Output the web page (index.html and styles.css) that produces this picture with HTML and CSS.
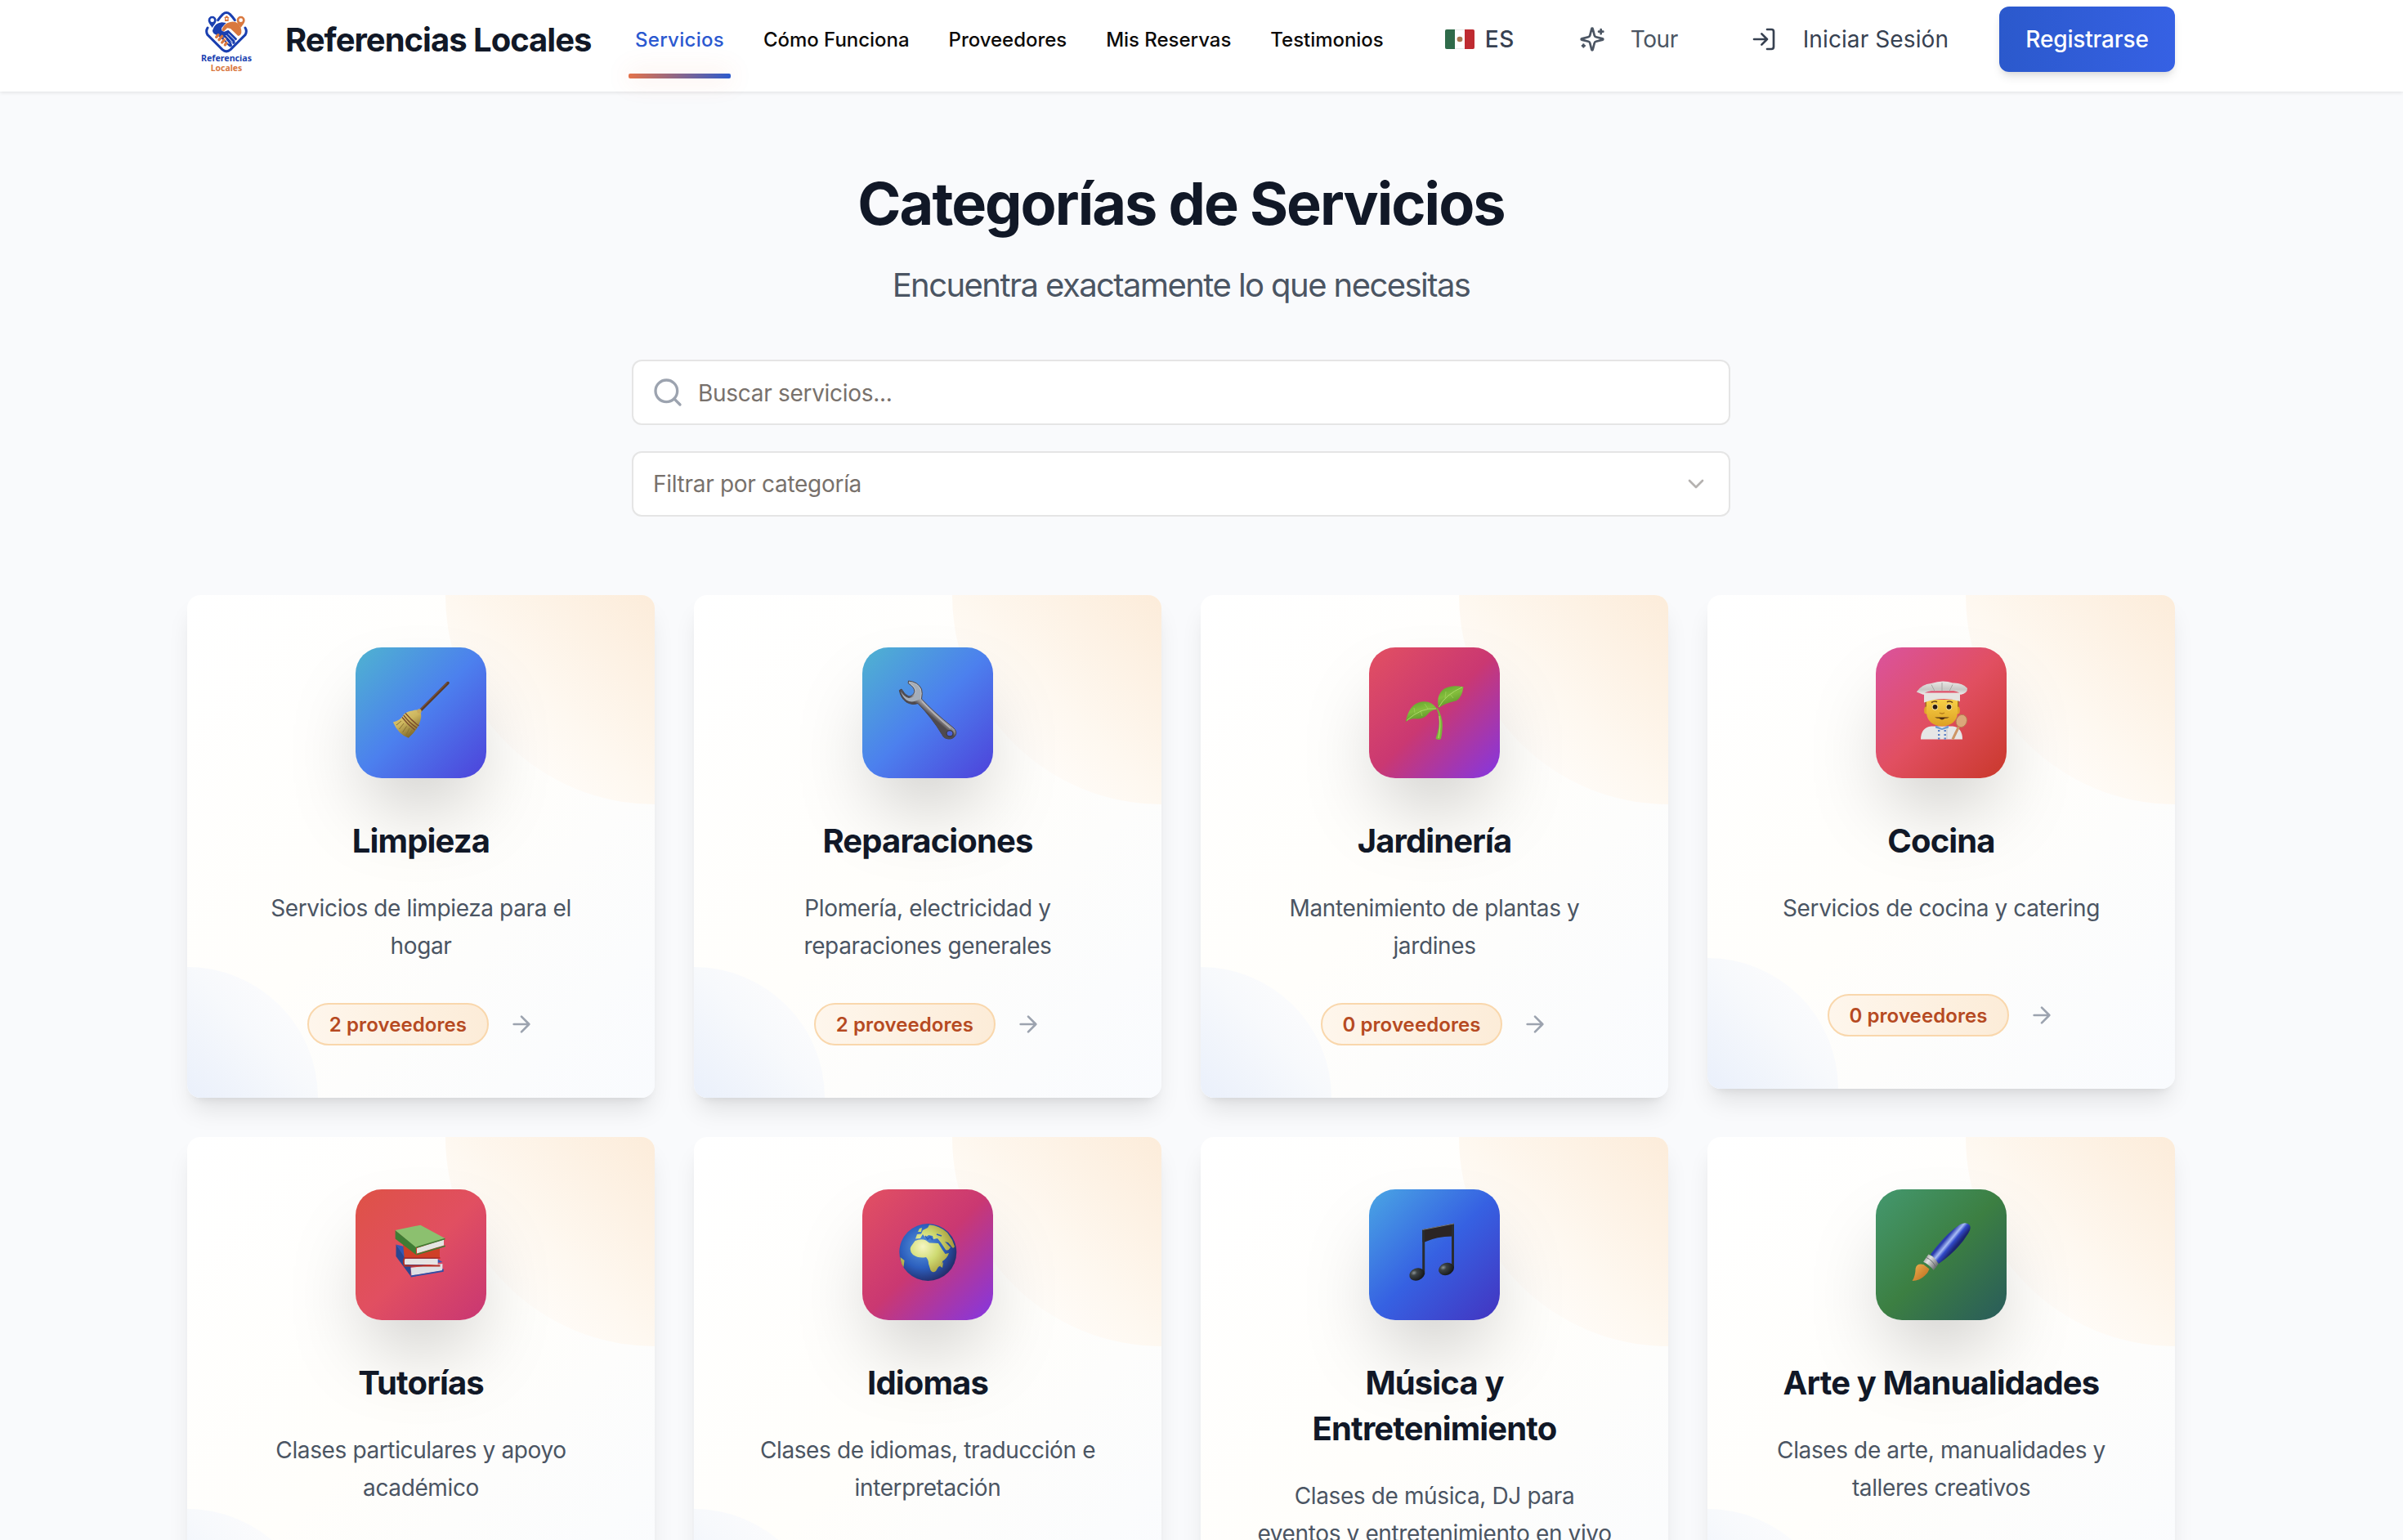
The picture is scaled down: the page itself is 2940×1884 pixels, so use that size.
FILE: index.html
```html
<!DOCTYPE html>
<html lang="es">
<head>
<meta charset="utf-8">
<title>Referencias Locales</title>
<link rel="stylesheet" href="styles.css">
</head>
<body>
<header class="header">
  <div class="header-inner">
    <a class="brand">
      <svg class="brand-logo" viewBox="-21 -18 288 288">
        <g fill="none" stroke="#1a3fb0" stroke-width="9" stroke-linecap="round" stroke-linejoin="round">
          <path d="M92 56 Q100 44 110 34 Q123 23 136 34 Q146 44 154 56"/>
          <path d="M54 84 Q46 96 54 110 L108 164 Q123 177 138 164 L192 110 Q200 96 192 84"/>
        </g>
        <path fill="#1a3fb0" d="M71 41a15 15 0 0 1 15 15c0 10-9 17-15 28c-6-11-15-18-15-28a15 15 0 0 1 15-15z"/>
        <circle cx="71" cy="56" r="7" fill="#fff"/>
        <path fill="#d9783f" d="M176 41a15 15 0 0 1 15 15c0 10-9 17-15 28c-6-11-15-18-15-28a15 15 0 0 1 15-15z"/>
        <circle cx="176" cy="56" r="7" fill="#fff"/>
        <path fill="#d9783f" d="M124 39l10 9h-3v12h-14v-12h-3z"/>
        <rect x="121" y="48" width="6" height="6" fill="#fff"/>
        <path fill="#1a3fb0" d="M72 94Q80 66 106 64L122 66L106 84Q102 98 116 98L130 92L162 124Q162 131 154 130L152 128Q160 142 148 144L136 132Q148 148 142 153Q136 157 130 150L116 134L96 116L82 108Q72 104 72 94z"/>
        <path fill="#d9783f" d="M106 92Q112 74 127 66Q150 56 166 68Q180 84 178 102Q176 112 166 114L138 87L126 85L116 95Q108 98 106 92z"/>
        <g stroke="#d9783f" stroke-width="10" stroke-linecap="round">
          <path d="M86 118l7-8M96 128l11-13M107 138l11-13M118 147l6-8"/>
        </g>
        <g stroke="#fff" stroke-width="3" stroke-linecap="round">
          <path d="M131 106l22 22M122 112l23 25M114 120l18 22"/>
        </g>
        <text class="logo-text" x="30" y="207" fill="#1a3fb0" textLength="186" lengthAdjust="spacingAndGlyphs">Referencias</text>
        <text class="logo-text" x="65" y="243" fill="#d9783f" textLength="116" lengthAdjust="spacingAndGlyphs">Locales</text>
      </svg>
      <span class="brand-name">Referencias Locales</span>
    </a>
    <nav class="nav">
      <a class="nav-link active">Servicios</a>
      <a class="nav-link">Cómo Funciona</a>
      <a class="nav-link">Proveedores</a>
      <a class="nav-link">Mis Reservas</a>
      <a class="nav-link">Testimonios</a>
    </nav>
    <div class="actions">
      <a class="lang">
        <svg class="flag" viewBox="0 0 36 24"><defs><clipPath id="flag-clip"><rect width="36" height="24" rx="2"/></clipPath></defs><g clip-path="url(#flag-clip)"><rect width="36" height="24" fill="#fff"/><path d="M0 0h36v24H0z" fill="none" stroke="#d5dad8"/><rect width="12" height="24" fill="#2f6b4a"/><rect x="24" width="12" height="24" fill="#bf2b31"/><ellipse cx="18" cy="12" rx="3.4" ry="3.2" fill="#a8764f"/></g></svg>
        <span>ES</span>
      </a>
      <a class="tour">
        <svg class="icon" viewBox="0 0 24 24"><path d="M9.937 15.5A2 2 0 0 0 8.5 14.063l-6.135-1.582a.5.5 0 0 1 0-.962L8.5 9.936A2 2 0 0 0 9.937 8.5l1.582-6.135a.5.5 0 0 1 .963 0L14.063 8.5A2 2 0 0 0 15.5 9.937l6.135 1.581a.5.5 0 0 1 0 .964L15.5 14.063a2 2 0 0 0-1.437 1.437l-1.582 6.135a.5.5 0 0 1-.963 0z"/><path d="M20 3v4M22 5h-4M4 17v2M5 18H3"/></svg>
        <span>Tour</span>
      </a>
      <a class="login">
        <svg class="icon" viewBox="0 0 24 24"><path d="M15 3h4a2 2 0 0 1 2 2v14a2 2 0 0 1-2 2h-4M10 17l5-5-5-5M15 12H3"/></svg>
        <span>Iniciar Sesión</span>
      </a>
      <a class="register">Registrarse</a>
    </div>
  </div>
</header>

<main class="main">
  <h1 class="title">Categorías de Servicios</h1>
  <p class="subtitle">Encuentra exactamente lo que necesitas</p>
  <div class="filters">
    <div class="field">
      <svg class="icon search-icon" viewBox="0 0 24 24"><circle cx="11" cy="11" r="8"/><path d="m21 21-4.3-4.3"/></svg>
      <span class="search-text">Buscar servicios...</span>
    </div>
    <div class="field select">
      <span>Filtrar por categoría</span>
      <svg class="icon chevron" viewBox="0 0 24 24"><path d="m6 9 6 6 6-6"/></svg>
    </div>
  </div>

  <section class="grid">
    <article class="card">
      <div class="tile sky">
        <svg class="glyph" viewBox="0 0 72 72">
          <defs><linearGradient id="straw" x1="0" y1="0" x2=".6" y2="1"><stop offset="0" stop-color="#e3cf80"/><stop offset=".5" stop-color="#cdb65e"/><stop offset="1" stop-color="#7a6327"/></linearGradient></defs>
          <path d="M69 3.6L35.5 37" stroke="#5b3a26" stroke-width="3.6" stroke-linecap="round"/>
          <path d="M68.500 3L35 36.200" stroke="#8a6142" stroke-width="1"/>
          <path d="M25.600 37.500Q31 35.500 34.500 38Q37.500 42 35.500 49Q33 60 20.800 70.800Q8 66 1.900 51.400Q12 49 15 42Q19 38 25.600 37.500z" fill="url(#straw)"/>
          <circle cx="34" cy="38" r="2.700" fill="#c9a95a"/>
          <path d="M17 40.500Q25 50 33.500 56M14.800 43Q22 52.500 31 58.500M13 45.500Q20 54.500 28.500 61" fill="none" stroke="#7b4a2b" stroke-width="1.300"/>
          <path d="M12 50L6 55M15 53L9.500 60M18.500 56.500L13.500 64M22 59L18 67M25 61L20.500 69" stroke="#8b7433" stroke-width="1"/>
        </svg>
      </div>
      <h3 class="name">Limpieza</h3>
      <p class="desc">Servicios de limpieza para el hogar</p>
      <div class="meta"><span class="badge">2 proveedores</span><svg class="icon arrow" viewBox="0 0 24 24"><path d="M5 12h14M12 5l7 7-7 7"/></svg></div>
    </article>

    <article class="card">
      <div class="tile sky">
        <svg class="glyph" viewBox="0 0 72 72">
          <defs><linearGradient id="steel" gradientUnits="userSpaceOnUse" x1="42" y1="34" x2="36" y2="41"><stop offset="0" stop-color="#b9bcc2"/><stop offset=".5" stop-color="#8d8a8d"/><stop offset="1" stop-color="#4f4a4e"/></linearGradient></defs>
          <path d="M12.500 1Q24 2 28.500 11Q30 16 28.500 23Q42 38 67 58Q73 63 69.500 68.500Q65 74 57.500 71Q55 70 53.500 66.500Q42 47 24 28.500Q17 31 10 27Q3 22 1.300 12.500L4 11Q8 18.500 13 20Q18 19.500 19.800 14.500Q20.500 9 12.200 4z" fill="url(#steel)" stroke="#4a464b" stroke-width="1" stroke-linejoin="round"/>
          <path d="M13.500 2Q22 3.500 26.500 11Q28.500 17 26.500 23Q17 29 10 24.500Q5 20.500 3 13.500Q7 20.500 13 22Q20 21 21.500 14.500Q22 8 13.500 3z" fill="#a4adb8"/>
          <path d="M29 26Q44 42 64 59" fill="none" stroke="#b8b4b6" stroke-width="1.400"/>
          <ellipse cx="63" cy="65.200" rx="4" ry="3.600" fill="#4b62dc" stroke="#3d3a40" stroke-width="1.300"/>
        </svg>
      </div>
      <h3 class="name">Reparaciones</h3>
      <p class="desc">Plomería, electricidad y reparaciones generales</p>
      <div class="meta"><span class="badge">2 proveedores</span><svg class="icon arrow" viewBox="0 0 24 24"><path d="M5 12h14M12 5l7 7-7 7"/></svg></div>
    </article>

    <article class="card">
      <div class="tile berry">
        <svg class="glyph" viewBox="0 0 72 72">
          <defs><linearGradient id="leaf" x1="0" y1="0" x2=".4" y2="1"><stop offset="0" stop-color="#5f9e2c"/><stop offset=".5" stop-color="#84be3d"/><stop offset="1" stop-color="#5c9228"/></linearGradient></defs>
          <path d="M39.500 34Q46 45 45.800 56Q45.500 66 43.800 72Q40.500 74 37.500 71.500Q42.500 58 41.500 47Q41 40 38.500 35z" fill="#7ab53a"/>
          <path d="M42 44Q44 56 41 71" fill="none" stroke="#a8d95c" stroke-width="1.300"/>
          <path d="M41 34Q38 20 45.500 12.500Q54 5 71.500 8.200Q69.500 22 62.500 25.500Q50 28 41 34z" fill="url(#leaf)"/>
          <path d="M39.500 35.500Q32 24.500 20 26.500Q5 29 .7 51Q7 46 15.500 47.500Q24 47 28.500 41Q32 36.500 39.500 35.500z" fill="url(#leaf)"/>
          <path d="M41.500 33Q49 18 70 8.700M38 35Q20 33 2 49.500" fill="none" stroke="#b0dc6b" stroke-width=".9"/>
          <path d="M49 22l1-8M55 17l4 5M28 35l-4-6M19 37l2 7M12 40l-1-6" stroke="#a4d35b" stroke-width=".7"/>
        </svg>
      </div>
      <h3 class="name">Jardinería</h3>
      <p class="desc">Mantenimiento de plantas y jardines</p>
      <div class="meta"><span class="badge">0 proveedores</span><svg class="icon arrow" viewBox="0 0 24 24"><path d="M5 12h14M12 5l7 7-7 7"/></svg></div>
    </article>

    <article class="card">
      <div class="tile rose">
        <svg class="glyph" viewBox="0 0 72 72">
          <defs>
            <linearGradient id="hat" x1="0" y1="0" x2="0" y2="1"><stop offset="0" stop-color="#e9e8e6"/><stop offset=".6" stop-color="#c9c7c4"/><stop offset="1" stop-color="#efeeec"/></linearGradient>
            <linearGradient id="skin" x1="0" y1="0" x2="0" y2="1"><stop offset="0" stop-color="#f7cf46"/><stop offset="1" stop-color="#dda022"/></linearGradient>
          </defs>
          <path d="M11 72.500Q11 58 24 56.500L50 56.500Q62 58 62 72.500z" fill="#e6e6e6"/>
          <path d="M29 55.500l8 3.500 8-3.500 0 3-8 2.500-8-2.500z" fill="#6f9bd0"/>
          <path d="M43 59v13" stroke="#bfc0c2" stroke-width=".8"/>
          <g fill="#5a7fc6"><rect x="32" y="61" width="2.400" height="2"/><rect x="32" y="66" width="2.400" height="2"/><rect x="32" y="70.500" width="2.400" height="2"/><rect x="39.500" y="61" width="2.400" height="2"/><rect x="39.500" y="66" width="2.400" height="2"/><rect x="39.500" y="70.500" width="2.400" height="2"/></g>
          <path d="M16.500 24h41v14h-41z" fill="#a4701f"/>
          <ellipse cx="17.500" cy="37" rx="2.400" ry="4.500" fill="#e0a62c"/><ellipse cx="56.500" cy="37" rx="2.400" ry="4.500" fill="#e0a62c"/>
          <path d="M18 24h38v16Q55 55 37 56.500Q19 55 18 40z" fill="url(#skin)"/>
          <path d="M24 27.500q4-2.500 7-.8M43 26.700q4-1.700 7 .8" fill="none" stroke="#6a4417" stroke-width="1.600"/>
          <circle cx="28.500" cy="33" r="3.700" fill="#fff" opacity=".6"/><circle cx="45.500" cy="33" r="3.700" fill="#fff" opacity=".6"/>
          <circle cx="28.500" cy="32.800" r="2.900" fill="#2b1b10"/><circle cx="45.500" cy="32.800" r="2.900" fill="#2b1b10"/>
          <path d="M34 40q3 2 6 0" fill="none" stroke="#b37a1b" stroke-width="1.300"/>
          <path d="M28 45.500h18q-3 1.500-5.500 1.300-3.500 3.500-7 0Q31 47 28 45.500z" fill="#4c2a12"/>
          <path d="M15 15.500h44v10.500Q37 19.500 15 27.500z" fill="#e6e4e1"/>
          <path d="M5.800 14.500Q12 5 24 4Q38-.8 50 3.500Q62 3 68 10Q68.500 16 59.500 18Q59 14.500 51 13.200H24Q15 14.500 14.500 18z" fill="url(#hat)"/>
          <path d="M24 5.500l4 8M37 3v10M50 5.500l-4 8" stroke="#aaa7a4" stroke-width="1"/>
          <path d="M57.500 57L50 72.500" stroke="#cd9565" stroke-width="3"/>
          <ellipse cx="60.800" cy="50" rx="6.500" ry="7.800" transform="rotate(20 60.800 50)" fill="#dba77a" stroke="#b57d51" stroke-width=".9"/>
        </svg>
      </div>
      <h3 class="name">Cocina</h3>
      <p class="desc">Servicios de cocina y catering</p>
      <div class="meta"><span class="badge">0 proveedores</span><svg class="icon arrow" viewBox="0 0 24 24"><path d="M5 12h14M12 5l7 7-7 7"/></svg></div>
    </article>

    <article class="card">
      <div class="tile red">
        <svg class="glyph" viewBox="0 0 72 72">
          <path d="M5.500 27.500L23.600 51.500V66.500L5.500 42z" fill="#2b4690"/>
          <path d="M5.500 27.500L40 36L62.400 49L23.600 55z" fill="#3458b5"/>
          <path d="M23.600 56L62.400 51V59.500L24.500 65.500z" fill="#dfe0e3"/>
          <path d="M23.600 66.500L62.800 60V57.500" fill="none" stroke="#2f4ea6" stroke-width="1.800"/>
          <path d="M14 26.500L59 31V43.500H15.700z" fill="#cf3f27"/>
          <path d="M15.700 45h41v7h-41z" fill="#e6e4e3"/>
          <path d="M59.500 43.800H16Q13.500 49 16 53.500h43.500" fill="none" stroke="#b52f22" stroke-width="1.800"/>
          <path d="M4.600 10L30 30V40L4.600 20.500z" fill="#3f7c34"/>
          <path d="M4.600 10L35.500 3.700L65.500 20L30 31z" fill="#8cc06f"/>
          <path d="M31 32L64 21.500V28.500L31 38.500z" fill="#e4e5e2"/>
          <path d="M30.500 31L65.500 20.500M30.500 39.800L65.800 29.300" stroke="#3f7c34" stroke-width="1.600"/>
        </svg>
      </div>
      <h3 class="name">Tutorías</h3>
      <p class="desc">Clases particulares y apoyo académico</p>
    </article>

    <article class="card">
      <div class="tile berry">
        <svg class="glyph" viewBox="0 0 72 72">
          <defs>
            <radialGradient id="sea" cx=".4" cy=".4" r=".62"><stop offset="0" stop-color="#5d9bdd"/><stop offset=".6" stop-color="#2c5fbe"/><stop offset="1" stop-color="#23306f"/></radialGradient>
            <radialGradient id="land" gradientUnits="userSpaceOnUse" cx="30" cy="30" r="38"><stop offset="0" stop-color="#f6f6c2"/><stop offset=".5" stop-color="#cfdb72"/><stop offset="1" stop-color="#a79a3b"/></radialGradient>
          </defs>
          <circle cx="36.300" cy="37" r="35" fill="url(#sea)"/>
          <g fill="url(#land)">
            <path d="M20.500 23Q28 20 34 22.500L38 25.500L49 26L54 34L57.500 39L62 38Q60 44 54 48Q54 53 49 55L46 60Q42 63 39.500 59L37 51Q37 46 34 43Q25 45 18 40Q13 35 15.500 30z"/>
            <path d="M21 20.500L23 15L28 14.500L30 10L36 7L38 3.500Q50 4 60 13L66 22L69 30Q67 34 64.500 29L61 25L57 24L64 31Q61 36 58 34L52 25L48 20L43 21L42 17L37 16L33 19L30 15L27 20z"/>
            <path d="M24 12l2-4 3-1-1 5zM51 54l4-5-1 7zM2.500 43l5 4-1 8q-3-3-4-12z"/>
          </g>
          <path d="M33 17l3 4 3-3 3 4M47 15l6 2" fill="none" stroke="#2c5fbe" stroke-width="1.500"/>
        </svg>
      </div>
      <h3 class="name">Idiomas</h3>
      <p class="desc">Clases de idiomas, traducción e interpretación</p>
    </article>

    <article class="card">
      <div class="tile ocean">
        <svg class="glyph" viewBox="0 0 72 72">
          <defs><radialGradient id="note" cx=".35" cy=".3" r=".7"><stop offset="0" stop-color="#8c9496"/><stop offset=".3" stop-color="#3c4244"/><stop offset="1" stop-color="#17191b"/></radialGradient></defs>
          <path d="M21.200 9.300L60 1.700V17.500Q40 17 24 24.500H21.200z" fill="#2b2525"/>
          <path d="M21.500 9.500L60 2" stroke="#777" stroke-width="1"/>
          <path d="M22.700 10v54M58.500 3v53" stroke="#2a2d30" stroke-width="3"/>
          <ellipse cx="14.600" cy="64" rx="9.600" ry="7.400" transform="rotate(-20 14.600 64)" fill="url(#note)"/>
          <ellipse cx="50.500" cy="57.500" rx="9.600" ry="7.400" transform="rotate(-20 50.500 57.500)" fill="url(#note)"/>
        </svg>
      </div>
      <h3 class="name">Música y Entretenimiento</h3>
      <p class="desc">Clases de música, DJ para eventos y entretenimiento en vivo</p>
    </article>

    <article class="card">
      <div class="tile forest">
        <svg class="glyph" viewBox="0 0 72 72">
          <defs>
            <linearGradient id="handle" gradientUnits="userSpaceOnUse" x1="42" y1="20" x2="54" y2="30"><stop offset="0" stop-color="#2a3cae"/><stop offset=".35" stop-color="#a9bdf5"/><stop offset=".6" stop-color="#3149c9"/><stop offset="1" stop-color="#1b2470"/></linearGradient>
            <linearGradient id="ring" x1="0" y1="0" x2="1" y2=".8"><stop offset="0" stop-color="#777"/><stop offset=".4" stop-color="#e2e2e2"/><stop offset="1" stop-color="#55585c"/></linearGradient>
            <linearGradient id="hair" x1="0" y1="0" x2="1" y2="1"><stop offset="0" stop-color="#f0b050"/><stop offset="1" stop-color="#b86a1c"/></linearGradient>
          </defs>
          <path d="M14.500 52Q6 50 4.600 57Q4.500 66 .6 72Q10 71.500 16 65.500Q20 62 21.500 57.500z" fill="url(#hair)"/>
          <path d="M23 39.500Q42 14 59 3Q67-1 71 4Q73 8 69 14Q57 34 33 51z" fill="url(#handle)"/>
          <path d="M20.400 39.500Q29 43 32.500 51.500L26.800 59Q21 52 14.100 48.800z" fill="url(#ring)"/>
          <path d="M18 43.500Q26 47 29.500 55.500" fill="none" stroke="#6a6d70" stroke-width="1"/>
        </svg>
      </div>
      <h3 class="name">Arte y Manualidades</h3>
      <p class="desc">Clases de arte, manualidades y talleres creativos</p>
    </article>
  </section>
</main>
</body>
</html>
```
FILE: styles.css
```css
* { box-sizing: border-box; margin: 0; padding: 0; }

body {
  height: 1884px;
  overflow: hidden;
  background: #f9fafc;
  color: #111827;
  font-family: Inter, "Noto Sans", sans-serif;
  font-size: 28px;
  white-space: nowrap;
}

.icon {
  display: block;
  flex: none;
  width: 32px;
  height: 32px;
  fill: none;
  stroke: currentColor;
  stroke-width: 2;
  stroke-linecap: round;
  stroke-linejoin: round;
}

/* Header */
.header {
  height: 112px;
  padding: 0 279px 0 229px;
  background: #fff;
  box-shadow: 0 2px 4px rgba(0, 0, 0, .08);
}

.header-inner {
  display: flex;
  align-items: center;
  height: 96px;
}

.brand { display: flex; align-items: center; gap: 24px; width: 540px; }
.brand-logo { width: 96px; height: 96px; flex: none; }
.logo-text { font: 700 33px "Noto Sans", sans-serif; }
.brand-name { font-size: 40px; font-weight: 700; letter-spacing: -1px; }

.nav { display: flex; gap: 32px; height: 96px; }
.nav-link {
  display: flex;
  align-items: center;
  position: relative;
  padding: 0 8px;
  color: #0c0a09;
  font-size: 24px;
  font-weight: 500;
  letter-spacing: -.03px;
}
.nav-link.active { color: #2b59d0; letter-spacing: .28px; }
.nav-link.active::after {
  content: "";
  position: absolute;
  left: 0;
  right: 0;
  bottom: 0;
  height: 6px;
  border-radius: 2px;
  background: linear-gradient(90deg, #e4724a, #2d5bcd);
  box-shadow: 0 0 30px rgba(228, 100, 60, .25);
}

.actions { display: flex; align-items: center; flex: 1; font-weight: 400; }
.lang, .tour, .login { display: flex; align-items: center; color: #374151; }
.lang { gap: 13px; margin-left: 67px; width: 164px; letter-spacing: .6px; font-weight: 500; }
.flag { width: 36px; height: 24px; flex: none; }
.tour { gap: 31px; width: 210px; color: #4b5563; letter-spacing: -.4px; }
.login { gap: 32px; letter-spacing: .1px; }
.register {
  display: flex;
  align-items: center;
  justify-content: center;
  width: 215px;
  height: 80px;
  margin-left: auto;
  border-radius: 12px;
  background: linear-gradient(90deg, #2b59cc, #3661e4);
  box-shadow: 0 8px 12px -2px rgba(0, 0, 0, .1), 0 4px 8px -4px rgba(0, 0, 0, .1);
  color: #fff;
  font-weight: 500;
  letter-spacing: -.17px;
}

/* Heading and filters */
.main { padding: 97px 279px 0 229px; }
.title {
  font-size: 72px;
  line-height: 80px;
  font-weight: 700;
  letter-spacing: -1.97px;
  text-align: center;
}
.subtitle {
  margin-top: 32px;
  font-size: 40px;
  line-height: 56px;
  letter-spacing: -1.56px;
  color: #4b5563;
  text-align: center;
}
.filters {
  display: flex;
  flex-direction: column;
  gap: 32px;
  width: 1344px;
  margin: 63px auto 96px;
}
.field {
  display: flex;
  align-items: center;
  height: 80px;
  padding: 0 24px 0 22px;
  border: 2px solid #e5e5e5;
  border-radius: 12px;
  background: #fff;
  color: #78716c;
  letter-spacing: -.3px;
}
.search-icon { width: 40px; height: 40px; margin-right: 17px; color: #9ca3af; }
.search-text { padding-top: 1px; }
.select { justify-content: space-between; padding-left: 24px; }
.chevron { color: #b5b2b0; }

/* Category cards */
.grid {
  display: grid;
  grid-template-columns: repeat(4, 572px);
  gap: 48px;
  align-items: start;
}
.card {
  display: flex;
  flex-direction: column;
  align-items: center;
  position: relative;
  min-height: 604px;
  padding: 64px;
  border-radius: 16px;
  overflow: hidden;
  background: linear-gradient(135deg, #fff, #fffefb 50%, #f9fbfe);
  box-shadow: 0 20px 30px -6px rgba(0, 0, 0, .1), 0 8px 12px -8px rgba(0, 0, 0, .1);
  text-align: center;
  white-space: normal;
}
/* Cards of the second row run past the fold */
.card:nth-child(n + 5) { min-height: 615px; }
.card:nth-child(7) { min-height: 671px; }

.card::before, .card::after { content: ""; position: absolute; }
.card::before {
  top: 0;
  right: 0;
  width: 256px;
  height: 256px;
  border-bottom-left-radius: 256px;
  background: linear-gradient(225deg, #fcecda, #fef8f0 50%, #fffdfb 80%);
}
.card::after {
  bottom: 0;
  left: 0;
  width: 160px;
  height: 160px;
  border-top-right-radius: 160px;
  background: linear-gradient(45deg, #eaf0fb, #f7f9fc 50%, #fcfcfd 80%);
}
.card > * { position: relative; z-index: 1; }

.tile {
  display: flex;
  align-items: center;
  justify-content: center;
  width: 160px;
  height: 160px;
  padding-bottom: 8px;
  margin-bottom: 49px;
  border-radius: 32px;
  box-shadow: 0 50px 100px -24px rgba(0, 0, 0, .25);
}
.sky { background: linear-gradient(135deg, #4fb3d0, #4c80ee 50%, #4d42da); }
.berry { background: linear-gradient(135deg, #e25062, #ca3872 50%, #8436e2); }
.rose { background: linear-gradient(135deg, #da539e, #e14f61 50%, #c9382b); }
.red { background: linear-gradient(135deg, #de5246, #e14f61 50%, #c83673); }
.ocean { background: linear-gradient(135deg, #4aa6e4, #3661e2 50%, #4334c0); }
.forest { background: linear-gradient(135deg, #44986f, #3c7f42 50%, #295b5b); }
.glyph { width: 72px; height: 72px; overflow: visible; }

.name {
  font-size: 40px;
  line-height: 56px;
  font-weight: 700;
  letter-spacing: -.86px;
}
.desc {
  min-height: 80px;
  margin: 32px 0 47px;
  color: #4b5563;
  line-height: 45.5px;
  letter-spacing: -.38px;
}
.meta { display: flex; align-items: center; gap: 24px; }
.badge {
  display: flex;
  align-items: center;
  justify-content: center;
  width: 222px;
  height: 52px;
  border: 2px solid #f9d7ac;
  border-radius: 26px;
  background: linear-gradient(90deg, #fef6ec, #fcecd8);
  color: #b64a22;
  font-size: 24px;
  font-weight: 600;
  letter-spacing: .09px;
}
.arrow { color: #9ca3af; }
```
